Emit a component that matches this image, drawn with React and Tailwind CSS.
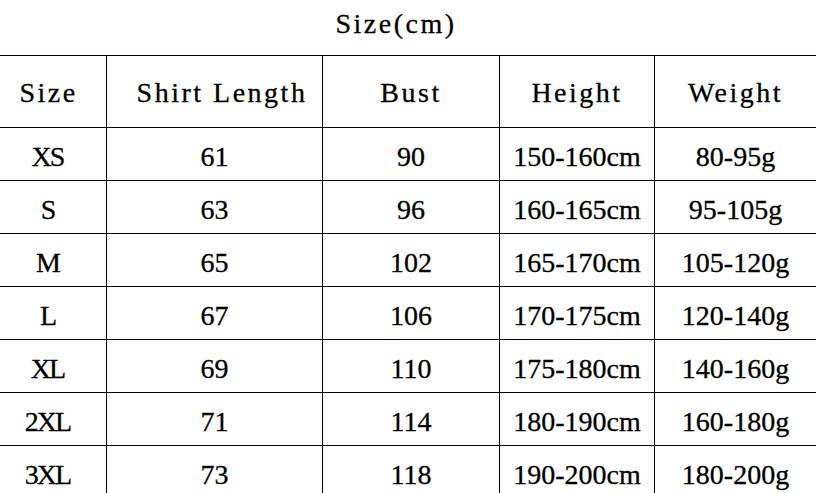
import React from "react";

const rows = [
  ["XS", "61", "90", "150-160cm", "80-95g"],
  ["S", "63", "96", "160-165cm", "95-105g"],
  ["M", "65", "102", "165-170cm", "105-120g"],
  ["L", "67", "106", "170-175cm", "120-140g"],
  ["XL", "69", "110", "175-180cm", "140-160g"],
  ["2XL", "71", "114", "180-190cm", "160-180g"],
  ["3XL", "73", "118", "190-200cm", "180-200g"],
];

const headers = ["Size", "Shirt Length", "Bust", "Height", "Weight"];

export default function App() {
  return (
    <div className="w-[816px] h-[493px] overflow-hidden bg-white text-black">
      <div className="h-[55px] flex items-center justify-center pr-[24px] pb-[8px] font-['Liberation_Serif',serif] text-[28px] tracking-[2.5px] [-webkit-text-stroke:0.3px_black]">
        Size(cm)
      </div>
      <div className="grid grid-cols-[107px_216px_177px_155px_161px] border-t border-black">
        {headers.map((h, i) => (
          <div
            key={h}
            className={
              "h-[72px] flex items-center justify-center pt-[2px] border-b border-black font-['Liberation_Serif',serif] text-[28px] tracking-[2.5px] [-webkit-text-stroke:0.3px_black] whitespace-nowrap " +
              (i < 4 ? "border-r " : "") +
              (i === 0 ? "pr-[9px] " : "") +
              (i === 1 ? "pl-[15px] " : "")
            }
          >
            {h}
          </div>
        ))}
        {rows.map((r) =>
          r.map((c, i) => (
            <div
              key={r[0] + i}
              className={
                "h-[53px] flex items-center justify-center pt-[5px] border-b border-black font-['Liberation_Serif',serif] text-[28px] [-webkit-text-stroke:0.3px_black] whitespace-nowrap " +
                (i < 4 ? "border-r " : "") +
                (i === 0 ? "pr-[11px] tracking-[-2px] " : "")
              }
            >
              {c}
            </div>
          ))
        )}
      </div>
    </div>
  );
}
